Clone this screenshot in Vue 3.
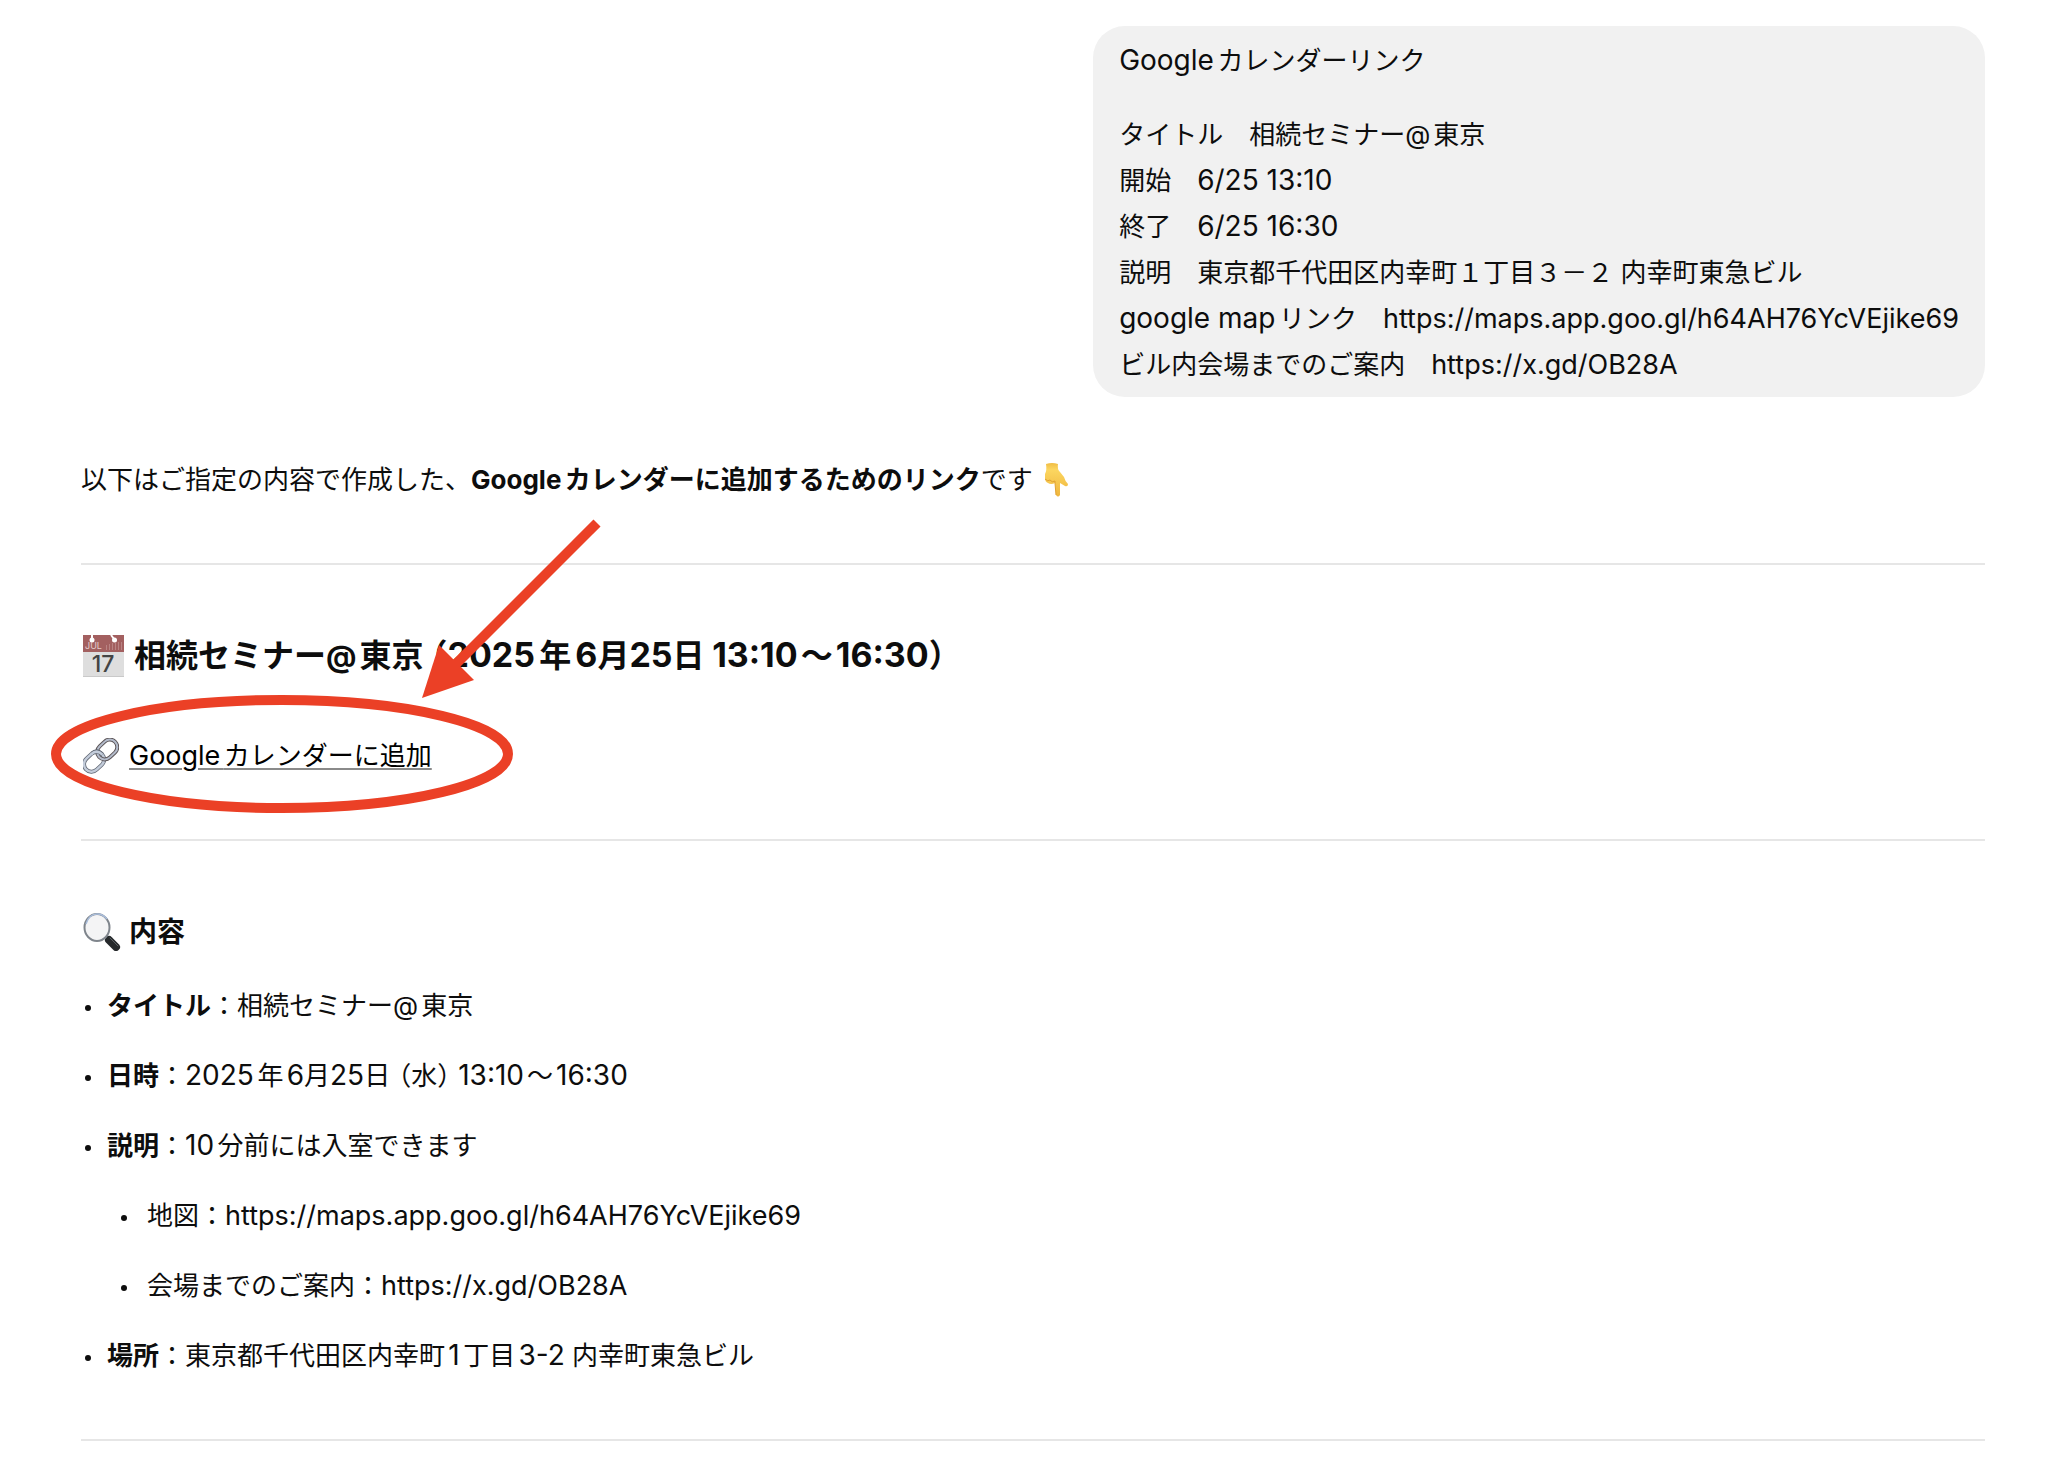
<script setup>
import { h } from 'vue'

const calendarUrl = 'https://calendar.google.com/calendar/render?action=TEMPLATE'

const request = [
  'タイトル　相続セミナー@東京',
  '開始　6/25 13:10',
  '終了　6/25 16:30',
  '説明　東京都千代田区内幸町１丁目３－２ 内幸町東急ビル',
  'google mapリンク　https://maps.app.goo.gl/h64AH76YcVEjike69',
  'ビル内会場までのご案内　https://x.gd/OB28A'
]

const details = [
  { label: 'タイトル', text: '：相続セミナー@東京' },
  { label: '日時', text: '：2025年6月25日（水）13:10〜16:30' },
  {
    label: '説明',
    text: '：10分前には入室できます',
    children: [
      '地図：https://maps.app.goo.gl/h64AH76YcVEjike69',
      '会場までのご案内：https://x.gd/OB28A'
    ]
  },
  { label: '場所', text: '：東京都千代田区内幸町1丁目3-2 内幸町東急ビル' }
]

const marks = { '（': 'open', '）': 'close', '〜': 'wave', '@': 'at' }

// Latin words and digits are set a little larger than the kana and kanji around them
function MixedText ({ text }) {
  return text
    .split(/(https:[!-~]+|月25日|[（）〜@]|[!-?A-~]+(?: [!-?A-~]+)*)/)
    .filter(Boolean)
    .map((part) => {
      if (marks[part]) return h('span', { class: marks[part] }, part)
      if (part === '月25日') {
        return h('span', { class: 'tight' }, ['月', h('span', { class: 'digits' }, '25'), '日'])
      }
      if (part.startsWith('https:')) return h('span', { class: 'url' }, part)
      if (/^[A-Za-z]/.test(part)) return h('span', { class: 'latin' }, part)
      if (/^[0-9]/.test(part)) return h('span', { class: 'digits' }, part)
      return part
    })
}
MixedText.props = ['text']
</script>

<template>
  <main class="chat" lang="ja">
    <div class="bubble">
      <p><MixedText text="Googleカレンダーリンク" /></p>
      <p>
        <span v-for="line in request" :key="line" class="line"><MixedText :text="line" /></span>
      </p>
    </div>

    <article class="answer">
      <p class="row">
        <span>以下はご指定の内容で作成した、<strong>Googleカレンダーに追加するためのリンク</strong>です</span>
        <svg class="hand" viewBox="0 0 26 36" aria-hidden="true">
          <defs>
            <linearGradient id="skin" x1="0" y1="0" x2="0" y2="1">
              <stop offset="0" stop-color="#f0bd45" />
              <stop offset="0.2" stop-color="#fcd660" />
              <stop offset="1" stop-color="#efb53c" />
            </linearGradient>
          </defs>
          <path d="M3 2 Q9 0 15 2 Q14 7 17 10 L21 15 Q22 19 25 22 Q25 25 22 24 L17 21 L17 33 Q15 36 13 33 L12 21 Q8 23 5 21 Q2 20 2 16 L2 12 Q4 8 3 2Z" fill="url(#skin)" />
          <path d="M2 17 Q5 20 7 18 Q9 21 12 19 L12 21 L13 33" fill="none" stroke="#e0a030" />
        </svg>
      </p>

      <hr>

      <h2 class="row">
        <svg class="calendar" viewBox="0 0 41 42" aria-hidden="true">
          <rect width="41" height="42" fill="#dedede" />
          <rect width="41" height="17" fill="#a36060" />
          <path d="M0 41.5h41" stroke="#c9c9c9" />
          <path d="M9 0v4M28 0l3 4" stroke="#fff" stroke-width="2" />
          <circle cx="9" cy="5" r="2.5" fill="#fff" />
          <circle cx="31.5" cy="5" r="2.5" fill="#fff" />
          <path d="M23.5 10v5M26.5 9v6M29.5 8v7M32.5 8v7M35.5 7v8M38.5 7v8" stroke="#b98383" />
          <text x="2" y="14" class="month">JUL</text>
          <text x="20" y="37" class="day">17</text>
        </svg>
        <span><MixedText text="相続セミナー@東京（2025年6月25日 13:10〜16:30）" /></span>
      </h2>

      <p class="row">
        <svg class="chain" viewBox="0 0 36 36" aria-hidden="true">
          <g fill="none" transform="rotate(-43 18 18)">
            <rect x="-2" y="10" width="22" height="15" rx="7.5" stroke="#5f6672" stroke-width="4" />
            <rect x="-2" y="10" width="22" height="15" rx="7.5" stroke="#c3ccda" stroke-width="2.5" />
            <rect x="16" y="10" width="22" height="15" rx="7.5" stroke="#5c5558" stroke-width="4" />
            <rect x="16" y="10" width="22" height="15" rx="7.5" stroke="#b4bccb" stroke-width="2" />
            <path d="M13 10 Q20 10 20 18" stroke="#5f6672" stroke-width="4" />
            <path d="M12 10 Q20 10 20 18" stroke="#c3ccda" stroke-width="2.5" />
          </g>
        </svg>
        <a :href="calendarUrl"><MixedText text="Googleカレンダーに追加" /></a>
      </p>

      <hr>

      <h3 class="row">
        <svg class="glass" viewBox="0 0 38 38" aria-hidden="true">
          <path d="M24 25l4 4" stroke="#777" stroke-width="4" />
          <path d="M26 27l7 7" stroke="#26292b" stroke-width="8" stroke-linecap="round" />
          <path d="M27 25l8 8" stroke="#5c6164" stroke-width="1" stroke-linecap="round" />
          <ellipse cx="14" cy="14.5" rx="12.5" ry="13.5" fill="#f4f4f5" stroke="#7f858c" stroke-width="2" />
          <path d="M3 11 Q6 1 14 1 Q20 1 24 6" fill="none" stroke="#a9bddb" stroke-width="1.5" />
        </svg>
        <span>内容</span>
      </h3>

      <ul>
        <li v-for="item in details" :key="item.label">
          <div>
            <strong>{{ item.label }}</strong><MixedText :text="item.text" />
            <ul v-if="item.children">
              <li v-for="child in item.children" :key="child">
                <div><MixedText :text="child" /></div>
              </li>
            </ul>
          </div>
        </li>
      </ul>

      <hr>
    </article>

    <!-- hand-drawn marks pointing at the calendar link -->
    <svg class="marks" viewBox="0 0 620 830" aria-hidden="true">
      <ellipse cx="282" cy="754" rx="226" ry="54" />
      <path d="M597 523L450 670" />
      <polygon points="422,698 439,645 474,680" />
    </svg>
  </main>
</template>

<style>
body {
  margin: 0;
  background: #fff;
}
</style>

<style scoped>
.chat {
  position: relative;
  display: flex;
  flex-direction: column;
  padding: 26px 65px 20px 81px;
  color: #0d0d0d;
  font-family: Inter, "Noto Sans CJK JP", sans-serif;
  font-size: 26px;
  line-height: 46px;
  text-autospace: normal;
}
p,
h2,
h3,
ul {
  margin: 0;
  padding: 0;
}
.bubble {
  display: flex;
  flex-direction: column;
  gap: 28px;
  align-self: flex-end;
  padding: 12px 26px 9px;
  border-radius: 32px;
  background: #f1f1f1;
}
.line {
  display: block;
}
.answer {
  padding-top: 60px;
}
.row {
  display: flex;
  align-items: center;
  gap: 10px;
}
strong,
h2,
h3 {
  font-weight: 700;
}
hr {
  height: 2px;
  margin: 60px 0 68px;
  border: 0;
  background: #e6e6e6;
}
h2 {
  margin-bottom: 54px;
  font-size: 32px;
}
h3 {
  margin-bottom: 28px;
  font-size: 28px;
}
h3.row {
  gap: 8px;
}
a {
  color: #000;
  text-decoration: underline;
  text-decoration-color: #8a8a8a;
  text-decoration-thickness: 2px;
  text-underline-offset: 3px;
}
:deep(.latin),
:deep(.url) {
  font-size: 27px;
  line-height: 1;
}
:deep(.digits),
.bubble :deep(.latin) {
  font-size: 28px;
  line-height: 1;
}
h2 :deep(.digits) {
  font-size: 34px;
}
:deep(.at) {
  margin-right: 3px;
}
h2 :deep(.at) {
  font-size: 30px;
}
:deep(.wave) {
  margin: 0 3px;
}
:deep(.tight) {
  text-autospace: no-autospace;
}
:deep(.open),
:deep(.close) {
  font-feature-settings: "halt";
}
:deep(.open) {
  padding-left: 8px;
}
:deep(.close) {
  padding-right: 8px;
}
svg {
  flex: none;
}
.hand {
  width: 26px;
  height: 36px;
}
.calendar {
  width: 41px;
  height: 42px;
  margin-left: 2px;
}
.month {
  fill: #e5cccc;
  font-size: 9px;
  font-weight: 400;
}
.day {
  fill: #444;
  font-size: 23px;
  font-weight: 500;
  text-anchor: middle;
}
.chain {
  width: 36px;
  height: 36px;
  margin-left: 2px;
}
.glass {
  width: 38px;
  height: 38px;
  margin-left: 2px;
}
ul {
  display: flex;
  flex-direction: column;
  gap: 24px;
  list-style: none;
}
li {
  display: flex;
  gap: 16px;
  padding-left: 4px;
}
li::before {
  content: "";
  flex: none;
  width: 6px;
  height: 6px;
  margin-top: 22px;
  border-radius: 50%;
  background: #0d0d0d;
}
li ul {
  margin-top: 24px;
  padding-left: 10px;
}
li li {
  gap: 20px;
}
.marks {
  position: absolute;
  top: 0;
  left: 0;
  width: 620px;
  height: 830px;
  pointer-events: none;
}
.marks ellipse,
.marks path {
  fill: none;
  stroke: #eb4026;
  stroke-width: 10px;
}
.marks polygon {
  fill: #eb4026;
}
</style>
